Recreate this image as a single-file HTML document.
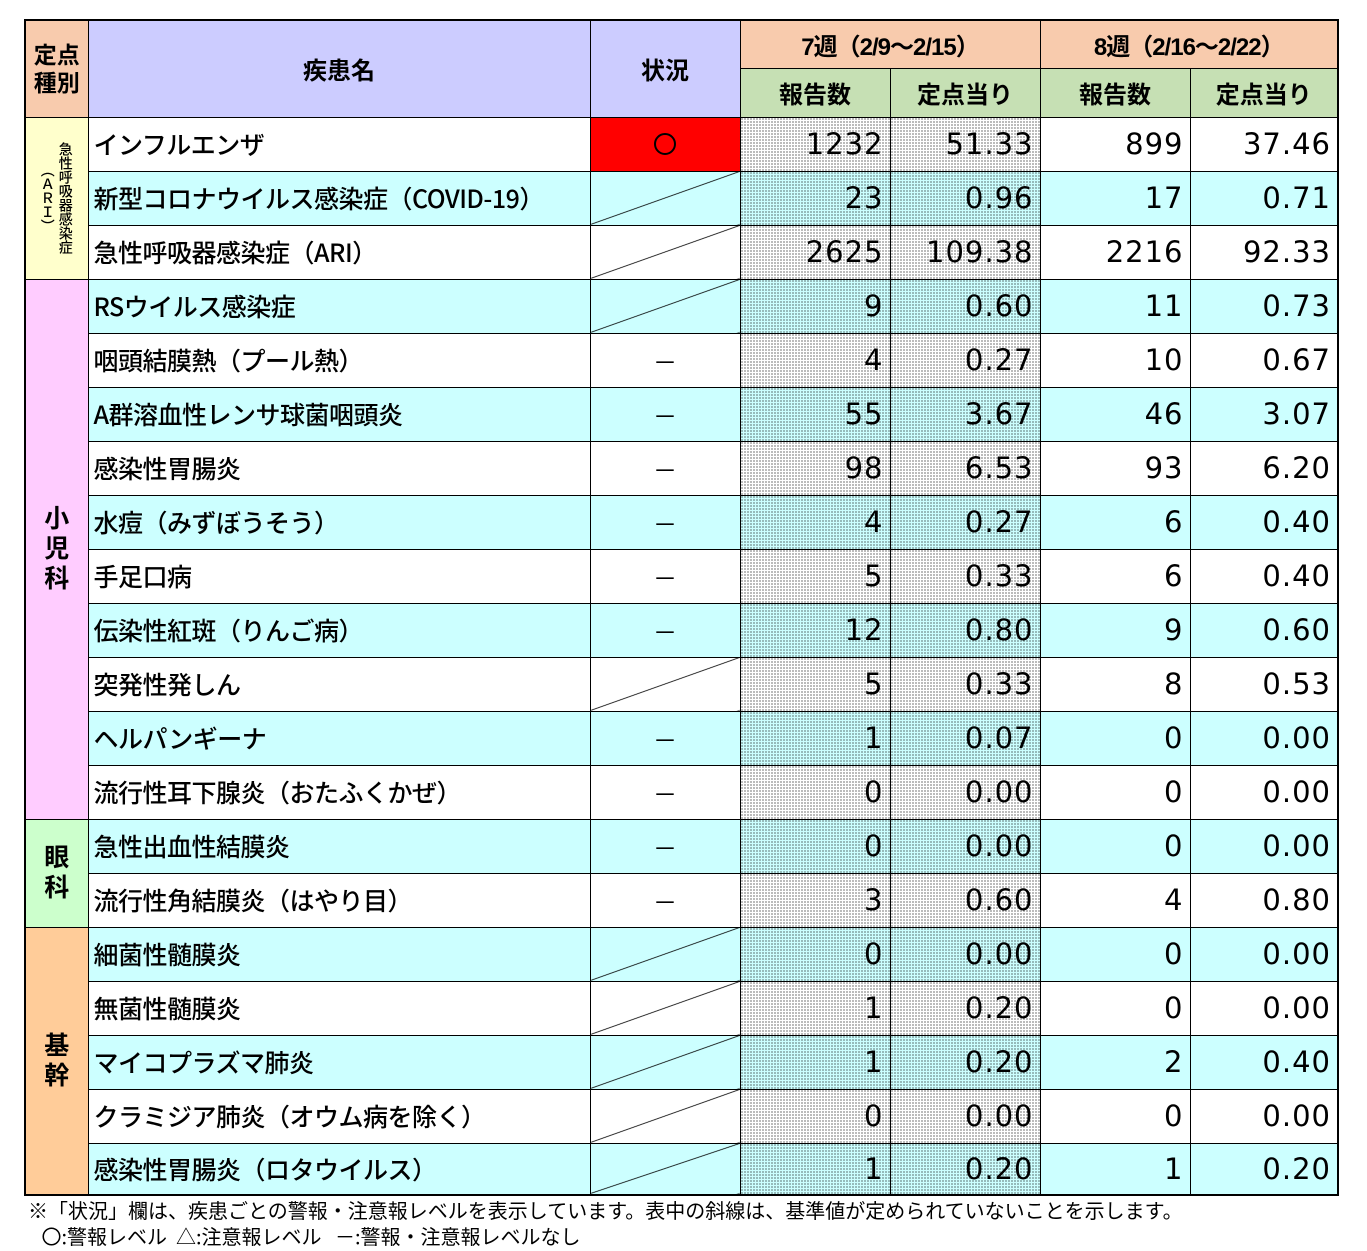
<!DOCTYPE html>
<html><head><meta charset="utf-8"><style>
*{margin:0;padding:0;box-sizing:border-box}
body{width:1367px;height:1251px;background:#fff;font-family:"Liberation Sans","Noto Sans CJK JP",sans-serif;color:#000;position:relative;overflow:hidden}
table{position:absolute;left:24px;top:19px;border-collapse:collapse;table-layout:fixed;border:2px solid #000}
td{border:1px solid #000;padding:0;overflow:hidden}
.h{text-align:center;font-size:24px;font-weight:bold}
.nm{font-size:25px;padding-left:5px;white-space:nowrap;font-weight:500;font-family:"Noto Sans CJK JP",sans-serif;letter-spacing:-0.5px}
.num{text-align:right;font-size:29px;padding-right:6px;font-family:"DejaVu Sans",sans-serif;letter-spacing:1px}
.dot{background-image:radial-gradient(circle,#000 0.5px,transparent 0.8px);background-size:3px 3px}
.c{background-color:#CCFFFF}
.w{background-color:#fff}
.sl{background-image:linear-gradient(to bottom right,transparent calc(50% - 0.8px),#000 50%,transparent calc(50% + 0.8px))}
.st{text-align:center;font-size:24px}
.cat{text-align:center;font-size:25px;font-weight:bold;line-height:30px}
</style></head><body>
<table>
<colgroup><col style="width:63px"><col style="width:502px"><col style="width:150px"><col style="width:150px"><col style="width:150px"><col style="width:150px"><col style="width:148px"></colgroup>
<tr style="height:48px"><td rowspan="2" class="h" style="background:#F8CBAD;line-height:28px;font-size:23px">定点<br>種別</td><td rowspan="2" class="h" style="background:#CCCCFF">疾患名</td><td rowspan="2" class="h" style="background:#CCCCFF">状況</td><td colspan="2" class="h" style="background:#F8CBAD;font-weight:bold;letter-spacing:-1px">7週（2/9～2/15）</td><td colspan="2" class="h" style="background:#F8CBAD;font-weight:bold;letter-spacing:-1px">8週（2/16～2/22）</td></tr>
<tr style="height:49px"><td class="h" style="background:#C6E0B4">報告数</td><td class="h" style="background:#C6E0B4">定点当り</td><td class="h" style="background:#C6E0B4">報告数</td><td class="h" style="background:#C6E0B4">定点当り</td></tr>

<tr style="height:54px"><td rowspan="3" style="background:#FFFFCC;text-align:center"><div style="writing-mode:vertical-rl;font-size:14px;line-height:18px;margin:auto;height:150px;font-weight:500">急性呼吸器感染症<br>（ＡＲＩ）</div></td>
<td class="nm w">インフルエンザ</td><td style="background:#FF0000"><div style="width:22px;height:22px;border:2px solid #000;border-radius:50%;margin:0 auto"></div></td><td class="num dot w">1232</td><td class="num dot w">51.33</td><td class="num w">899</td><td class="num w">37.46</td></tr>
<tr style="height:54px"><td class="nm c">新型コロナウイルス感染症（COVID-19）</td><td class="c sl"></td><td class="num dot c">23</td><td class="num dot c">0.96</td><td class="num c">17</td><td class="num c">0.71</td></tr>
<tr style="height:54px"><td class="nm w">急性呼吸器感染症（ARI）</td><td class="w sl"></td><td class="num dot w">2625</td><td class="num dot w">109.38</td><td class="num w">2216</td><td class="num w">92.33</td></tr>

<tr style="height:54px"><td rowspan="10" class="cat" style="background:#FFCCFF">小<br>児<br>科</td>
<td class="nm c">RSウイルス感染症</td><td class="c sl"></td><td class="num dot c">9</td><td class="num dot c">0.60</td><td class="num c">11</td><td class="num c">0.73</td></tr>
<tr style="height:54px"><td class="nm w">咽頭結膜熱（プール熱）</td><td class="st w">－</td><td class="num dot w">4</td><td class="num dot w">0.27</td><td class="num w">10</td><td class="num w">0.67</td></tr>
<tr style="height:54px"><td class="nm c">A群溶血性レンサ球菌咽頭炎</td><td class="st c">－</td><td class="num dot c">55</td><td class="num dot c">3.67</td><td class="num c">46</td><td class="num c">3.07</td></tr>
<tr style="height:54px"><td class="nm w">感染性胃腸炎</td><td class="st w">－</td><td class="num dot w">98</td><td class="num dot w">6.53</td><td class="num w">93</td><td class="num w">6.20</td></tr>
<tr style="height:54px"><td class="nm c">水痘（みずぼうそう）</td><td class="st c">－</td><td class="num dot c">4</td><td class="num dot c">0.27</td><td class="num c">6</td><td class="num c">0.40</td></tr>
<tr style="height:54px"><td class="nm w">手足口病</td><td class="st w">－</td><td class="num dot w">5</td><td class="num dot w">0.33</td><td class="num w">6</td><td class="num w">0.40</td></tr>
<tr style="height:54px"><td class="nm c">伝染性紅斑（りんご病）</td><td class="st c">－</td><td class="num dot c">12</td><td class="num dot c">0.80</td><td class="num c">9</td><td class="num c">0.60</td></tr>
<tr style="height:54px"><td class="nm w">突発性発しん</td><td class="w sl"></td><td class="num dot w">5</td><td class="num dot w">0.33</td><td class="num w">8</td><td class="num w">0.53</td></tr>
<tr style="height:54px"><td class="nm c">ヘルパンギーナ</td><td class="st c">－</td><td class="num dot c">1</td><td class="num dot c">0.07</td><td class="num c">0</td><td class="num c">0.00</td></tr>
<tr style="height:54px"><td class="nm w">流行性耳下腺炎（おたふくかぜ）</td><td class="st w">－</td><td class="num dot w">0</td><td class="num dot w">0.00</td><td class="num w">0</td><td class="num w">0.00</td></tr>

<tr style="height:54px"><td rowspan="2" class="cat" style="background:#CCFFCC">眼<br>科</td>
<td class="nm c">急性出血性結膜炎</td><td class="st c">－</td><td class="num dot c">0</td><td class="num dot c">0.00</td><td class="num c">0</td><td class="num c">0.00</td></tr>
<tr style="height:54px"><td class="nm w">流行性角結膜炎（はやり目）</td><td class="st w">－</td><td class="num dot w">3</td><td class="num dot w">0.60</td><td class="num w">4</td><td class="num w">0.80</td></tr>

<tr style="height:54px"><td rowspan="5" class="cat" style="background:#FFCC99">基<br>幹</td>
<td class="nm c">細菌性髄膜炎</td><td class="c sl"></td><td class="num dot c">0</td><td class="num dot c">0.00</td><td class="num c">0</td><td class="num c">0.00</td></tr>
<tr style="height:54px"><td class="nm w">無菌性髄膜炎</td><td class="w sl"></td><td class="num dot w">1</td><td class="num dot w">0.20</td><td class="num w">0</td><td class="num w">0.00</td></tr>
<tr style="height:54px"><td class="nm c">マイコプラズマ肺炎</td><td class="c sl"></td><td class="num dot c">1</td><td class="num dot c">0.20</td><td class="num c">2</td><td class="num c">0.40</td></tr>
<tr style="height:54px"><td class="nm w">クラミジア肺炎（オウム病を除く）</td><td class="w sl"></td><td class="num dot w">0</td><td class="num dot w">0.00</td><td class="num w">0</td><td class="num w">0.00</td></tr>
<tr style="height:52px"><td class="nm c">感染性胃腸炎（ロタウイルス）</td><td class="c sl"></td><td class="num dot c">1</td><td class="num dot c">0.20</td><td class="num c">1</td><td class="num c">0.20</td></tr>
</table>
<div style="position:absolute;left:28px;top:1197px;font-size:20px;line-height:26px;white-space:nowrap;font-family:'Noto Sans CJK JP',sans-serif">※「状況」欄は、疾患ごとの警報・注意報レベルを表示しています。表中の斜線は、基準値が定められていないことを示します。<br>&nbsp;&nbsp;&nbsp;〇:警報レベル&nbsp;&nbsp;△:注意報レベル&nbsp;&nbsp;&nbsp;－:警報・注意報レベルなし</div>
</body></html>
